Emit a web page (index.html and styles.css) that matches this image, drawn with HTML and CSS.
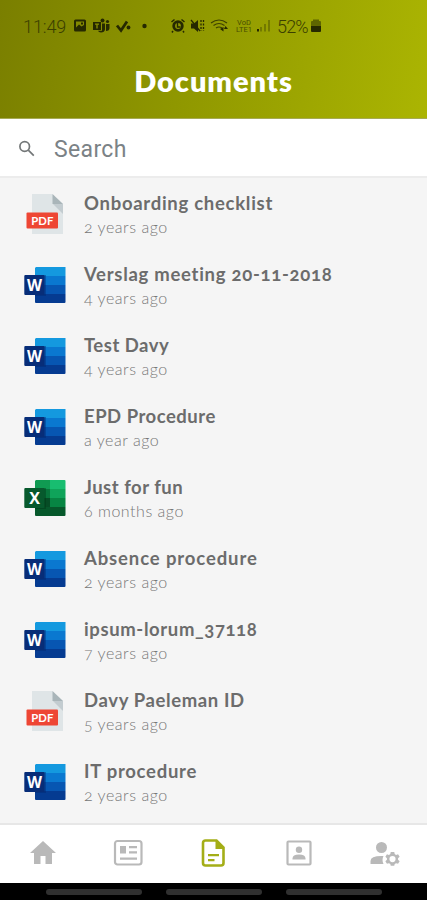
FILE: index.html
```
<!DOCTYPE html>
<html lang="en">
<head>
<meta charset="utf-8">
<title>Documents</title>
<link rel="stylesheet" href="styles.css">
</head>
<body>
<svg class="defs" width="0" height="0" aria-hidden="true">
  <defs>
    <symbol id="pdf" viewBox="0 0 44 44">
      <path d="M10 2h20l11 10v30H10z" fill="#dfe5e7"/>
      <path d="M31 12h10v10z" fill="#c3ccd0"/>
      <path d="M30.500 2L41 12H30.500z" fill="#a9b5b9"/>
      <rect x="4.500" y="20.500" width="31.500" height="16" rx="1" fill="#ee4634"/>
      <text x="20.300" y="32.500" text-anchor="middle" class="pdf-label" textLength="22" lengthAdjust="spacingAndGlyphs">PDF</text>
    </symbol>
    <symbol id="word" viewBox="0 0 44 44">
      <path d="M14 4h29.500v9H13V5z" fill="#1499df"/>
      <path d="M13 13h30.500v9H13z" fill="#0a78d0"/>
      <path d="M13 22h30.500v9H13z" fill="#0756b2"/>
      <path d="M13 31h30.500v8a1 1 0 0 1-1 1H14a1 1 0 0 1-1-1z" fill="#053b91"/>
      <path d="M13 12h11v21H13z" fill="#00256b" opacity=".4"/>
      <rect x="2.300" y="12" width="20.200" height="20" rx="1" fill="#072d78"/>
      <text x="12.600" y="27.500" text-anchor="middle" class="app-label" textLength="15" lengthAdjust="spacingAndGlyphs">W</text>
    </symbol>
    <symbol id="excel" viewBox="0 0 44 44">
      <path d="M14 4h14v9H13V5z" fill="#109a52"/>
      <path d="M28 4h14.500a1 1 0 0 1 1 1v8H28z" fill="#18bd70"/>
      <path d="M13 13h15v9H13z" fill="#08753c"/>
      <path d="M28 13h15.500v9H28z" fill="#0fa45a"/>
      <path d="M13 22h15v9H13z" fill="#064d26"/>
      <path d="M28 22h15.500v9H28z" fill="#078543"/>
      <path d="M13 31h30.500v8a1 1 0 0 1-1 1H14a1 1 0 0 1-1-1z" fill="#06582b"/>
      <path d="M13 12h11v21H13z" fill="#003517" opacity=".4"/>
      <rect x="2.300" y="12" width="20.200" height="20" rx="1" fill="#07592d"/>
      <text x="12.600" y="27.500" text-anchor="middle" class="app-label">X</text>
    </symbol>
  </defs>
</svg>
<div class="screen">
  <header class="header">
    <div class="status">
      <span class="time">11:49</span>
      <svg class="notices" width="78" height="18" viewBox="0 0 78 18">
        <path fill-rule="evenodd" d="M2.500 2.500h9q1.500 0 1.500 1.500v9q0 1.500-1.500 1.500h-9Q1 14.500 1 13V4q0-1.500 1.500-1.500zM3 4.500v6l3-3 2.500 2L11 8V4.500zM8 5.500h2v2H8z"/>
        <path fill-rule="evenodd" d="M20 5h8v8h-8zm2 1.500v1.200h1.300V11.500h1.400V7.700H26V6.500z"/>
        <circle cx="29.500" cy="3.500" r="2"/><circle cx="34.500" cy="4.500" r="1.600"/>
        <path d="M29 6.500h3v6q-.5 3-4 3-2.500 0-3-1.800h4zM33 7h3.500v4.500q-.5 2.500-3.500 2.500z"/>
        <path d="M44 8.500l4 5 6-9" fill="none" stroke="#262900" stroke-width="2.800"/><circle cx="55.500" cy="10.500" r="1.900"/>
        <circle cx="71.500" cy="9" r="2.200"/>
      </svg>
      <svg class="signals" width="101" height="18" viewBox="0 0 101 18">
        <path d="M1.500 5l3-2.500M14.500 5l-3-2.500M3 14l-1 1.500M13 14l1 1.500" fill="none" stroke="#262900" stroke-width="1.500"/>
        <circle cx="8" cy="9" r="4.300" fill="none" stroke="#262900" stroke-width="2.800"/><path d="M7.500 6v4h3" fill="none" stroke="#262900" stroke-width="1.400"/>
        <path d="M21 6.500h3l4-3.500v12l-4-3.500h-3z"/><path d="M21 3l9 11" stroke="#262900" stroke-width="1.300"/><path d="M31 3v11M33.500 3v11" stroke="#262900" stroke-width="1.300" stroke-dasharray="2 1.500"/>
        <g fill="none" stroke="#3c4000" stroke-width="1.200"><path d="M41 6q8-6 16 0M43.500 8.500q5.500-4 11 0M46 11q3-2 6 0"/></g><path d="M50 12l3.500 2.500V10zM55.500 9l2.500 3h-4z"/>
        <text x="67" y="7.500" class="tiny" textLength="14">VoD</text><text x="66" y="15" class="tiny" textLength="16">LTE1</text>
        <path d="M87 12h2v2.500h-2z"/><path d="M91 10v4.500M95 7v7.500M99 3v11.500" stroke="#606600" stroke-width="1.300"/>
      </svg>
      <span class="percent">52%</span>
      <svg class="battery" width="10" height="18" viewBox="0 0 10 18"><path d="M0 8.500h10V14q0 1-1 1H1q-1 0-1-1z"/><path d="M0 8V5q0-1 1-1h1V2.500h6V4h1q1 0 1 1v3z" fill="#5e6500"/></svg>
    </div>
    <h1>Documents</h1>
  </header>
  <div class="search">
    <svg width="18" height="18" viewBox="0 0 18 18" fill="none" stroke="#737778" stroke-width="1.700"><circle cx="6.700" cy="6.500" r="4.800"/><path d="M10.300 10.200l5.500 5.500"/></svg>
    <span>Search</span>
  </div>
  <main class="list">
    <article class="row"><svg class="file"><use href="#pdf"/></svg><div><h2 class="wide">Onboarding checklist</h2><p>2 years ago</p></div></article>
    <article class="row"><svg class="file"><use href="#word"/></svg><div><h2 class="wide">Verslag meeting 20-11-2018</h2><p>4 years ago</p></div></article>
    <article class="row"><svg class="file"><use href="#word"/></svg><div><h2>Test Davy</h2><p>4 years ago</p></div></article>
    <article class="row"><svg class="file"><use href="#word"/></svg><div><h2>EPD Procedure</h2><p>a year ago</p></div></article>
    <article class="row"><svg class="file"><use href="#excel"/></svg><div><h2>Just for fun</h2><p>6 months ago</p></div></article>
    <article class="row"><svg class="file"><use href="#word"/></svg><div><h2 class="wider">Absence procedure</h2><p>2 years ago</p></div></article>
    <article class="row"><svg class="file"><use href="#word"/></svg><div><h2 class="roomy">ipsum-lorum_37118</h2><p>7 years ago</p></div></article>
    <article class="row"><svg class="file"><use href="#pdf"/></svg><div><h2 class="roomy">Davy Paeleman ID</h2><p>5 years ago</p></div></article>
    <article class="row"><svg class="file"><use href="#word"/></svg><div><h2 class="wide">IT procedure</h2><p>2 years ago</p></div></article>
  </main>
  <nav class="tabs">
    <svg viewBox="0 0 32 32"><path d="M16 4L3 16h4v11h6.500v-8h5v8H25V16h4z"/></svg>
    <svg viewBox="0 0 32 32"><rect x="3" y="4" width="26.500" height="23.500" rx="2.500" fill="none" stroke="#b9b9b9" stroke-width="2.200"/><path d="M8 9h6v7.500H8zM17 9h8v2.300h-8zM17 14.200h8v2.300h-8zM8 20.500h17v2.300H8z"/></svg>
    <svg class="active" viewBox="0 0 32 32"><path d="M8.500 3.500h11l7 7V26q0 2.500-2.500 2.500H8.500Q6 28.500 6 26V6q0-2.500 2.500-2.500z" fill="none" stroke="#a4ae17" stroke-width="2.600"/><path d="M18.500 3v9H27zM11 17h11v2.200H11zM11 22h6.500v2.200H11z"/></svg>
    <svg viewBox="0 0 32 32"><rect x="4.500" y="4.500" width="23" height="23" rx="1" fill="none" stroke="#b9b9b9" stroke-width="2.200"/><circle cx="16" cy="12.700" r="3.200"/><path d="M9.500 22.500v-1q0-4 6.500-4t6.500 4v1z"/></svg>
    <svg viewBox="0 0 32 32"><circle cx="13.500" cy="10.500" r="5.500"/><path d="M2.500 27v-3q0-5 11-5h2q-2 4 0 8z"/><path fill-rule="evenodd" d="M23 16h4l.5 2.300 1.500.9 2.300-.8 1.800 3-1.800 1.600v1.800l1.800 1.600-1.800 3-2.300-.8-1.500.9L27 31.500h-4l-.5-2-1.500-.9-2.300.8-1.800-3 1.800-1.600V23l-1.800-1.600 1.800-3 2.300.8 1.500-.9zM25 20.500a3.500 3.500 0 1 0 0 7 3.500 3.500 0 0 0 0-7z" transform="translate(2.500 1) scale(.88)"/></svg>
  </nav>
  <footer class="system"><i></i><i></i><i></i></footer>
</div>
</body>
</html>
```
FILE: styles.css
```
* { box-sizing: border-box; }
body { margin: 0; }
.defs { display: block; height: 0; }
.screen { width: 427px; height: 900px; display: flex; flex-direction: column; background: #f5f5f5; font-family: Lato, "Open Sans", sans-serif; overflow: hidden; }
.header { height: 119px; background: linear-gradient(100deg, #7a7f00 0%, #8f9700 43%, #abb502 100%); border-bottom: 1px solid #a6aa55; }
.status { height: 52px; padding-left: 23px; display: flex; align-items: center; font: 18px Roboto, sans-serif; color: #3b3f00; }
.status svg { fill: #262900; flex: none; }
.time { width: 50px; font-weight: 300; letter-spacing: -.1px; }
.signals { margin-left: 19px; }
.tiny { font: 7.5px Roboto, sans-serif; fill: #484d00; }
.percent { width: 34px; margin-left: 6px; letter-spacing: -.8px; font-weight: 300; }
h1 { margin: 11px 0 0; text-align: center; font-size: 29px; line-height: 36px; font-weight: 800; color: #fff; letter-spacing: .95px; }
.search { height: 59px; background: #fff; border-bottom: 2px solid #ececec; padding: 4px 0 0 18px; display: flex; align-items: center; gap: 18px; font: 23px/30px Roboto, sans-serif; color: #7b8286; letter-spacing: .35px; }
.search svg { margin: 0 0 2px; }
.list { height: 645px; }
.row { height: 71px; padding-left: 22px; display: flex; align-items: center; gap: 18px; }
.row > div { padding-top: 3px; }
.file { width: 44px; height: 44px; }
.pdf-label { font: 700 11px Lato, sans-serif; fill: #fff; }
.app-label { font: 700 16px "Open Sans", sans-serif; fill: #fff; }
h2 { margin: 0; padding-top: 1px; font-size: 18.500px; line-height: 23px; font-weight: 700; color: #6c6c6c; letter-spacing: .5px; font-variant-numeric: oldstyle-nums; }
.roomy { letter-spacing: .62px; }
.wide { letter-spacing: .72px; }
.wider { letter-spacing: .88px; }
p { margin: 0; font-size: 16px; line-height: 24px; font-weight: 300; color: #777; letter-spacing: .52px; font-variant-numeric: oldstyle-nums; }
.tabs { height: 60px; border-top: 2px solid #e7e7e7; padding-bottom: 2px; background: #fff; display: grid; grid-template-columns: repeat(5, 1fr); place-items: center; }
.tabs svg { width: 32px; height: 32px; fill: #b9b9b9; }
.tabs .active { fill: #a4ae17; }
.system { height: 17px; background: #000; display: flex; justify-content: center; align-items: center; gap: 24px; padding-left: 1px; }
.system i { width: 96px; height: 6px; border-radius: 3px; background: #303030; }
```
